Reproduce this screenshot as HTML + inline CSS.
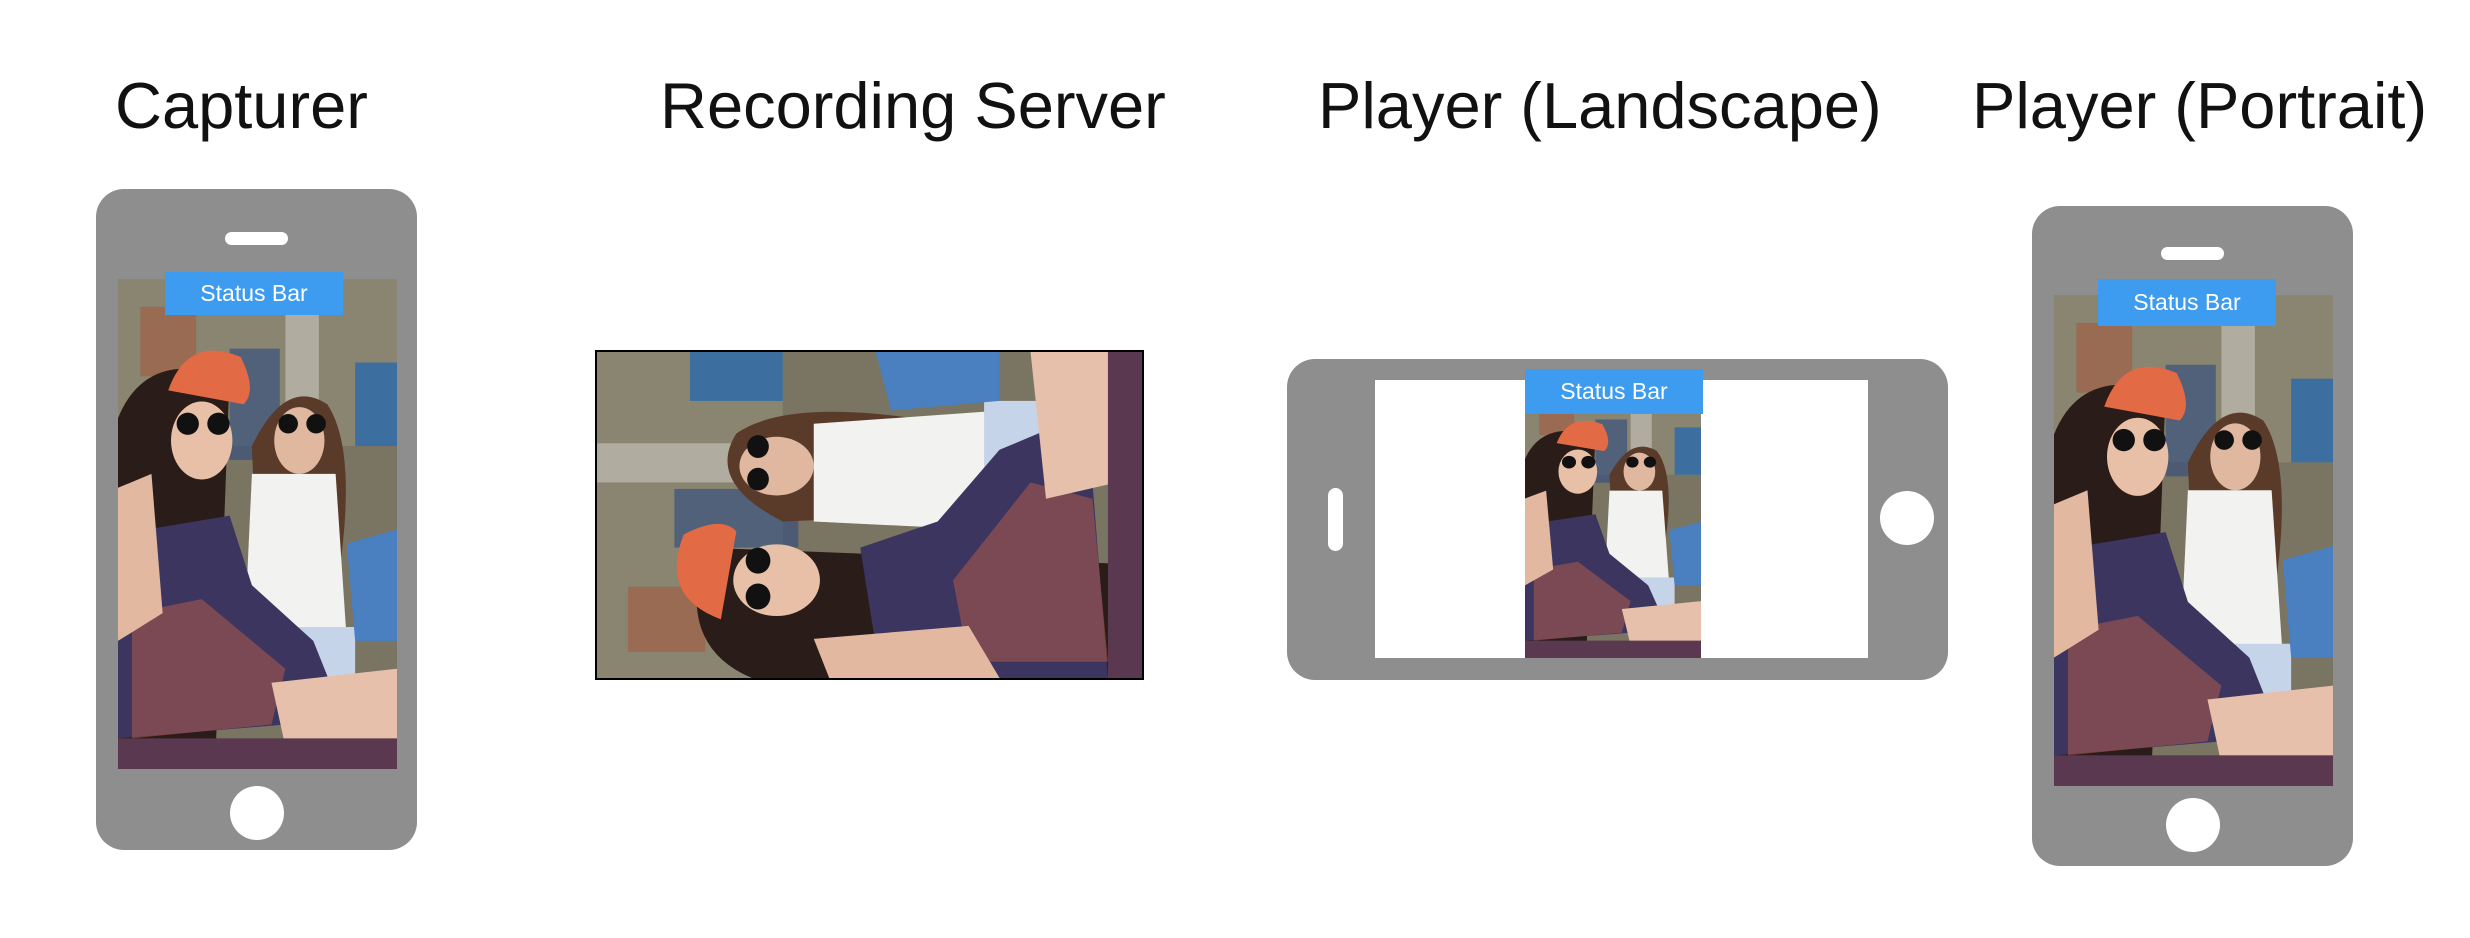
<!DOCTYPE html>
<html><head><meta charset="utf-8"><style>
body{margin:0;width:2470px;height:938px;background:#fff;position:relative;overflow:hidden;font-family:"Liberation Sans",Arial,sans-serif}
.t{position:absolute;font-size:65px;color:#111;top:68px;white-space:nowrap}
.a{position:absolute}
.ph{background:#8e8e8e;border-radius:28px}
.sb{background:#3d9cf0;color:#fff;font-size:23px;text-align:center}
.hb{background:#fff;border-radius:50%}
svg{display:block}
</style></head><body>
<svg width="0" height="0" style="position:absolute">
<defs>
<symbol id="p" viewBox="0 0 100 176" preserveAspectRatio="none">
<rect width="100" height="176" fill="#7a7462"/>
<rect x="0" y="0" width="100" height="60" fill="#8a8570"/>
<rect x="8" y="10" width="20" height="25" fill="#a55a40" opacity=".6"/>
<rect x="60" y="0" width="12" height="70" fill="#b0aca0"/>
<rect x="85" y="30" width="15" height="30" fill="#3c6fa0"/>
<rect x="40" y="25" width="18" height="40" fill="#2d4a80" opacity=".6"/>
<path d="M0 50 Q10 25 40 35 L35 170 L0 176Z" fill="#2a1c18"/>
<path d="M18 40 Q25 20 44 28 Q50 40 45 45 Z" fill="#e26a45"/>
<ellipse cx="30" cy="58" rx="11" ry="14" fill="#e8c0a8"/>
<circle cx="25" cy="52" r="4" fill="#111"/><circle cx="36" cy="52" r="4" fill="#111"/>
<path d="M48 60 Q60 35 75 45 Q85 60 80 100 L50 110Z" fill="#5a3a28"/>
<ellipse cx="65" cy="58" rx="9" ry="12" fill="#e0b8a0"/>
<circle cx="61" cy="52" r="3.5" fill="#111"/><circle cx="71" cy="52" r="3.5" fill="#111"/>
<path d="M48 70 L78 70 L82 130 L45 135Z" fill="#f2f2f0"/>
<rect x="45" y="125" width="40" height="18" fill="#c6d4ea"/>
<path d="M82 95 L100 90 L100 130 L85 130Z" fill="#4a7fc0"/>
<path d="M10 90 L40 85 L48 110 L70 130 L78 150 L60 160 L0 165 L0 110Z" fill="#3b3560"/>
<path d="M5 120 L30 115 L60 140 L55 160 L5 165Z" fill="#b05a4a" opacity=".55"/>
<path d="M0 75 L12 70 L16 120 L0 130Z" fill="#e2b8a0"/>
<path d="M55 145 L100 140 L100 168 L60 168Z" fill="#e6c0aa"/>
<rect x="0" y="165" width="100" height="11" fill="#5a3850"/>
</symbol>
</defs></svg>

<div class="t" style="left:115px">Capturer</div>
<div class="t" style="left:660px">Recording Server</div>
<div class="t" style="left:1318px">Player (Landscape)</div>
<div class="t" style="left:1972px">Player (Portrait)</div>

<div class="a ph" style="left:96px;top:189px;width:321px;height:661px"></div>
<div class="a" style="left:225px;top:232px;width:63px;height:13px;background:#fff;border-radius:7px"></div>
<svg class="a" style="left:118px;top:279px" width="279" height="490"><use href="#p"/></svg>
<div class="a sb" style="left:165px;top:272px;width:178px;height:43px;line-height:43px">Status Bar</div>
<div class="a hb" style="left:230px;top:786px;width:54px;height:54px"></div>

<div class="a" style="left:595px;top:350px;width:549px;height:330px;background:#000"></div>
<svg class="a" style="left:597px;top:352px;width:545px;height:326px" viewBox="0 0 545 326" preserveAspectRatio="none">
<g transform="translate(0,326) rotate(-90)"><use href="#p" width="326" height="545"/></g>
</svg>

<div class="a ph" style="left:1287px;top:359px;width:661px;height:321px"></div>
<div class="a" style="left:1375px;top:380px;width:493px;height:278px;background:#fff"></div>
<svg class="a" style="left:1525px;top:380px" width="176" height="278"><use href="#p"/></svg>
<div class="a sb" style="left:1525px;top:369px;width:178px;height:45px;line-height:45px">Status Bar</div>
<div class="a" style="left:1328px;top:488px;width:15px;height:63px;background:#fff;border-radius:8px"></div>
<div class="a hb" style="left:1880px;top:491px;width:54px;height:54px"></div>

<div class="a ph" style="left:2032px;top:206px;width:321px;height:660px"></div>
<div class="a" style="left:2161px;top:247px;width:63px;height:13px;background:#fff;border-radius:7px"></div>
<svg class="a" style="left:2054px;top:295px" width="279" height="491"><use href="#p"/></svg>
<div class="a sb" style="left:2098px;top:279px;width:178px;height:47px;line-height:47px">Status Bar</div>
<div class="a hb" style="left:2166px;top:798px;width:54px;height:54px"></div>
</body></html>
